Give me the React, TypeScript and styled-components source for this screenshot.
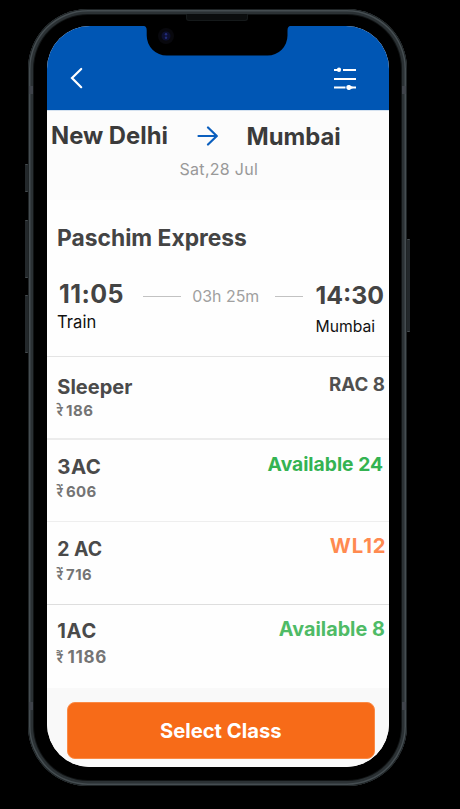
import React from "react";
import styled, { createGlobalStyle, css } from "styled-components";

const GlobalStyle = createGlobalStyle`
  * { box-sizing: border-box; }
  body {
    margin: 0;
    background: #000;
    font-family: Inter, "Noto Sans", sans-serif;
    white-space: nowrap;
    overflow: hidden;
  }
`;

const Stage = styled.main`
  width: 460px;
  height: 809px;
  padding: 9px 0 0 28px;
  background: #000;
`;

const Phone = styled.div`
  position: relative;
  width: 379px;
  height: 777px;
  padding: 17px 18px 18px 18.5px;
  border-radius: 60px;
  background: #000;
  box-shadow:
    inset 0 0 0 1px #1f2426,
    inset 0 0 0 2.5px #454d51,
    inset 0 0 0 5px #2b3134,
    inset 0 0 0 6px #111415;
`;

const SideKey = styled.i<{ $side: "left" | "right"; $top: number; $height: number }>`
  position: absolute;
  ${({ $side }) => ($side === "left" ? "left: -3px;" : "right: -3px;")}
  top: ${({ $top }) => $top}px;
  width: 3px;
  height: ${({ $height }) => $height}px;
  border: solid #464c50;
  border-width: 1px 0;
  border-radius: 1px;
  background: #23282b;
`;

const Band = styled.i<{ $side: "left" | "right"; $top: number }>`
  position: absolute;
  ${({ $side }) => ($side === "left" ? "left: 1px;" : "right: 1px;")}
  top: ${({ $top }) => $top}px;
  width: 4px;
  height: 8px;
  background: #3f434a;
`;

const Speaker = styled.i`
  position: absolute;
  left: 158px;
  top: 5px;
  width: 62px;
  height: 7px;
  border: 1px solid #15191a;
  border-top: 0;
  border-radius: 0 0 3px 3px;
  background: #0b0d0e;
`;

const Notch = styled.svg`
  position: absolute;
  left: 113px;
  top: 16px;
  width: 153px;
  height: 31px;
`;

const Screen = styled.div`
  display: flex;
  flex-direction: column;
  height: 741px;
  overflow: hidden;
  border-radius: 43px;
  background: #fefefe;
`;

const AppBar = styled.header`
  flex: none;
  display: flex;
  justify-content: space-between;
  height: 84px;
  padding: 41px 32.5px 0 23.5px;
  background: #0056b4;
`;

const IconButton = styled.button`
  display: flex;
  height: 24px;
  padding: 0;
  border: 0;
  background: none;
`;

const Route = styled.section`
  flex: none;
  height: 90px;
  border-top: 1px solid #d5e2f0;
  background: #fcfcfc;
`;

const Cities = styled.div`
  display: flex;
  align-items: flex-start;
  padding: 10px 0 0 4.5px;
`;

const City = styled.h1`
  flex: none;
  margin: 0;
  color: #3b3b3b;
  font-size: 23.8px;
  font-weight: 700;
  line-height: 30px;
`;

const Origin = styled(City)`
  width: 145px;
`;

const Destination = styled(City)`
  padding-top: 1px;
`;

const ArrowIcon = styled.svg`
  flex: none;
  width: 22px;
  height: 22px;
  margin: 4px 28.5px 0 0;
`;

const TravelDate = styled.p`
  margin: 7px 0 0 133px;
  color: #999;
  font-size: 16px;
  letter-spacing: 0.3px;
  line-height: 20px;
`;

const Train = styled.section`
  flex: none;
  height: 156px;
  padding: 23px 0 0 10.6px;
`;

const TrainName = styled.h2`
  margin: 0;
  color: #444;
  font-size: 22.8px;
  font-weight: 700;
  line-height: 30px;
`;

const Journey = styled.div`
  display: flex;
  padding-top: 27px;
`;

const Stop = styled.div<{ $width: number }>`
  flex: none;
  width: ${({ $width }) => $width}px;
`;

const DepartTime = styled.div`
  padding-left: 2px;
  color: #444;
  font-size: 25px;
  font-weight: 700;
  letter-spacing: 0.4px;
  line-height: 28px;
`;

const ArriveTime = styled(DepartTime)`
  padding: 1px 0 0;
  font-size: 24.8px;
  letter-spacing: 0;
`;

const DepartPlace = styled.div`
  margin-top: 2px;
  color: #111;
  font-size: 16.6px;
  line-height: 24px;
`;

const ArrivePlace = styled(DepartPlace)`
  margin-top: 6px;
  font-size: 15.7px;
`;

const Duration = styled.div`
  flex: none;
  display: flex;
  align-items: center;
  width: 172.2px;
  height: 32px;
  color: #a0a0a0;
  font-size: 15.9px;
`;

const Dash = styled.i<{ $width: number }>`
  flex: none;
  width: ${({ $width }) => $width}px;
  height: 1px;
  background: #c2c2c2;
`;

const DurationText = styled.span`
  margin: 0 16px 0 11px;
`;

const FareList = styled.ul`
  flex: none;
  height: 332px;
  margin: 0;
  padding: 0;
  list-style: none;
`;

const FareRow = styled.li<{ $height: number; $thick?: boolean; $line: string }>`
  display: flex;
  justify-content: space-between;
  height: ${({ $height }) => $height}px;
  padding-left: 10.2px;
  border-top: ${({ $thick, $line }) => `${$thick ? 2 : 1}px solid ${$line}`};
`;

type Type = { size: number; spacing?: number };
const type = css<{ $type: Type }>`
  font-size: ${({ $type }) => $type.size}px;
  letter-spacing: ${({ $type }) => $type.spacing ?? 0}px;
`;

const ClassName = styled.h3<{ $type: Type; $top: number }>`
  margin: 0;
  padding-top: ${({ $top }) => $top}px;
  padding-left: 0.6px;
  color: #4a4a4a;
  font-weight: 700;
  line-height: 24px;
  ${type}
`;

const Price = styled.div<{ $type: Type; $gap: number }>`
  display: flex;
  align-items: baseline;
  height: 18px;
  margin-top: ${({ $gap }) => $gap}px;
  color: #747474;
  font-weight: 700;
  line-height: 18px;
  ${type}
`;

const Rupee = styled.span<{ $width: number }>`
  flex: none;
  width: ${({ $width }) => $width}px;
  font-family: "Noto Sans", sans-serif;
  font-size: 14px;
  font-weight: 600;
  letter-spacing: 0;
`;

const Status = styled.div<{ $type: Type; $top: number; $right: number; $color: string }>`
  padding: ${({ $top, $right }) => `${$top}px ${$right}px 0 0`};
  color: ${({ $color }) => $color};
  font-weight: 700;
  line-height: 24px;
  ${type}
`;

const Footer = styled.footer`
  flex: 1;
  padding: 13.5px 14.5px 0 20.5px;
  background: #f9f9f9;
`;

const SelectButton = styled.button`
  display: block;
  width: 100%;
  height: 57px;
  padding: 1px 0 0;
  border: 1px solid #fb8a45;
  border-radius: 8px;
  background: #f76b18;
  color: #fff;
  font: 700 20.2px/24px Inter, sans-serif;
`;

const fares = [
  { name: "Sleeper", nameType: { size: 20 }, nameTop: 18, symbol: "रे", symbolWidth: 9.2, price: "186", priceType: { size: 15, spacing: 0.6 }, gap: 3,
    status: "RAC 8", statusType: { size: 18.7 }, statusTop: 16, right: 4.2, color: "#505050", height: 82, line: "#e4e4e4" },
  { name: "3AC", nameType: { size: 20.4, spacing: 0.5 }, nameTop: 15, symbol: "रें", symbolWidth: 9.2, price: "606", priceType: { size: 15, spacing: 0.4 }, gap: 4,
    status: "Available 24", statusType: { size: 19.25 }, statusTop: 12, right: 6, color: "#34b352", height: 83, line: "#ececec", thick: true },
  { name: "2 AC", nameType: { size: 19.4 }, nameTop: 15, symbol: "रें", symbolWidth: 9.4, price: "716", priceType: { size: 14.8, spacing: 0.5 }, gap: 5,
    status: "WL12", statusType: { size: 20.3, spacing: 0.9 }, statusTop: 12, right: 2.5, color: "#ff8a50", height: 83, line: "#eeeeee" },
  { name: "1AC", nameType: { size: 20, spacing: 0.7 }, nameTop: 14, symbol: "रैं", symbolWidth: 10.8, price: "1186", priceType: { size: 17, spacing: 0.7 }, gap: 5,
    status: "Available 8", statusType: { size: 19.8 }, statusTop: 12, right: 4.2, color: "#4fbb66", height: 84, line: "#dedede" },
];

export default function App() {
  return (
    <Stage>
      <GlobalStyle />
      <Phone>
        <SideKey $side="left" $top={155} $height={28} />
        <SideKey $side="left" $top={211} $height={58} />
        <SideKey $side="left" $top={286} $height={58} />
        <SideKey $side="right" $top={230} $height={93} />
        <Band $side="left" $top={77} />
        <Band $side="right" $top={77} />
        <Band $side="left" $top={693} />
        <Band $side="right" $top={693} />
        <Screen>
          <AppBar>
            <IconButton aria-label="Back">
              <svg width="14" height="24" fill="none" stroke="#fff" strokeWidth="2.2" strokeLinecap="round">
                <path d="M11.2 2 2 11 11.2 20.2" />
              </svg>
            </IconButton>
            <IconButton aria-label="Filters">
              <svg width="24" height="24" fill="none" stroke="#fff" strokeWidth="2">
                <path d="M1 3h5M10 3h13M1 12h22M1 20.5h11.500M15 20.500h8" />
                <ellipse cx="6" cy="2.8" rx="2.1" ry="2.3" fill="#fff" stroke="none" />
                <path d="M13.3 20.5c0-3.4 4.2-2.8 5.4-.9l3.3.9-3.3.9c-1.2 1.9-5.4 2.4-5.4-.9Z" fill="#fff" stroke="none" />
              </svg>
            </IconButton>
          </AppBar>
          <Route>
            <Cities>
              <Origin>New Delhi</Origin>
              <ArrowIcon viewBox="0 0 22 22" fill="none" stroke="#0b5fbe" strokeWidth="2.2" strokeLinecap="round" strokeLinejoin="round">
                <path d="M2.5 11h18M12 2.500l8.8 8.500-8.800 8.500" />
              </ArrowIcon>
              <Destination>Mumbai</Destination>
            </Cities>
            <TravelDate>Sat,28 Jul</TravelDate>
          </Route>
          <Train>
            <TrainName>Paschim Express</TrainName>
            <Journey>
              <Stop $width={86.2}>
                <DepartTime>11:05</DepartTime>
                <DepartPlace>Train</DepartPlace>
              </Stop>
              <Duration>
                <Dash $width={38} />
                <DurationText>03h 25m</DurationText>
                <Dash $width={28} />
              </Duration>
              <Stop $width={72}>
                <ArriveTime>14:30</ArriveTime>
                <ArrivePlace>Mumbai</ArrivePlace>
              </Stop>
            </Journey>
          </Train>
          <FareList>
            {fares.map((f) => (
              <FareRow key={f.name} $height={f.height} $line={f.line} $thick={f.thick}>
                <div>
                  <ClassName $type={f.nameType} $top={f.nameTop}>{f.name}</ClassName>
                  <Price $type={f.priceType} $gap={f.gap}>
                    <Rupee $width={f.symbolWidth}>{f.symbol}</Rupee>
                    {f.price}
                  </Price>
                </div>
                <Status $type={f.statusType} $top={f.statusTop} $right={f.right} $color={f.color}>{f.status}</Status>
              </FareRow>
            ))}
          </FareList>
          <Footer>
            <SelectButton>Select Class</SelectButton>
          </Footer>
        </Screen>
        <Notch viewBox="0 0 153 31">
          <path d="M2 0h149v1h-1.500q-3 0-3 4.500v5a20 20 0 0 1-20 20h-100.800a20 20 0 0 1-20-20v-5q0-4.500-3-4.500h-.700Z" fill="#000" />
          <circle cx="25" cy="11" r="8" fill="#08080d" />
          <circle cx="25" cy="11" r="4.500" fill="#0d1030" />
          <circle cx="25" cy="9.300" r="1.200" fill="#222b78" />
          <circle cx="25" cy="12.700" r="1.200" fill="#222b78" />
        </Notch>
        <Speaker />
      </Phone>
    </Stage>
  );
}
